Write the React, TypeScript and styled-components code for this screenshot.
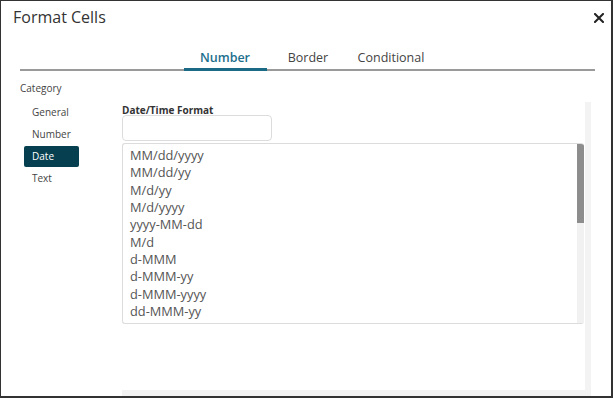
import React from 'react';
import styled, { createGlobalStyle } from 'styled-components';

const formats = [
  'MM/dd/yyyy',
  'MM/dd/yy',
  'M/d/yy',
  'M/d/yyyy',
  'yyyy-MM-dd',
  'M/d',
  'd-MMM',
  'd-MMM-yy',
  'd-MMM-yyyy',
  'dd-MMM-yy',
];

const categories = ['General', 'Number', 'Date', 'Text'];
const tabs = ['Number', 'Border', 'Conditional'];

const App: React.FC = () => {
  return (
    <>
      <GlobalStyle />
      <Dialog>
        <Header>
          <Title>Format Cells</Title>
          <CloseButton aria-label='close'>
            <svg width='10' height='10' viewBox='0 0 10 10'>
              <path d='M1 1 L9 9 M9 1 L1 9' stroke='#222' strokeWidth='2' strokeLinecap='square' />
            </svg>
          </CloseButton>
        </Header>

        <TabBar>
          {tabs.map((t) => (
            <Tab key={t} $active={t === 'Number'}>
              {t}
            </Tab>
          ))}
        </TabBar>

        <Body>
          <Sidebar>
            <SidebarTitle>Category</SidebarTitle>
            {categories.map((c) => (
              <CategoryItem key={c} $selected={c === 'Date'}>
                {c}
              </CategoryItem>
            ))}
          </Sidebar>

          <Panel>
            <PanelContent>
              <FieldLabel>Date/Time Format</FieldLabel>
              <Input />
              <ListBox>
                <List>
                  {formats.map((f) => (
                    <ListItem key={f}>{f}</ListItem>
                  ))}
                </List>
                <ListTrack>
                  <ListThumb />
                </ListTrack>
              </ListBox>
            </PanelContent>
            <TrackV />
            <TrackH />
          </Panel>
        </Body>
      </Dialog>
    </>
  );
};

const GlobalStyle = createGlobalStyle`
  * { box-sizing: border-box; }
  html, body {
    margin: 0;
    padding: 0;
    background: #fff;
  }
  body {
    font-family: 'Open Sans', 'Liberation Sans', sans-serif;
    color: #333;
  }
`;

const Dialog = styled.div`
  width: 613px;
  height: 398px;
  border-style: solid;
  border-color: #333;
  border-width: 1px 2px 2px 1px;
  display: flex;
  flex-direction: column;
  overflow: hidden;
  background: #fff;
`;

const Header = styled.div`
  display: flex;
  align-items: center;
  justify-content: space-between;
  padding: 4px 5px 0 12px;
  height: 28px;
`;

const Title = styled.h1`
  margin: 0;
  font-size: 16px;
  font-weight: 400;
  color: #333;
`;

const CloseButton = styled.button`
  border: 0;
  background: none;
  padding: 0;
  width: 14px;
  height: 14px;
  display: flex;
  align-items: center;
  justify-content: center;
  margin-top: 2px;
`;

const TabBar = styled.div`
  margin: 14px 16px 0 19px;
  display: flex;
  justify-content: center;
  border-bottom: 2px solid #9a9a9a;
  height: 28px;
  padding-left: 1px;
`;

const Tab = styled.div<{ $active?: boolean }>`
  min-width: 83px;
  padding: 5px 8px 0;
  text-align: center;
  font-size: 12.5px;
  line-height: 19px;
  color: ${(p) => (p.$active ? '#1c6f8c' : '#444')};
  font-weight: ${(p) => (p.$active ? 600 : 400)};
  border-bottom: 3px solid ${(p) => (p.$active ? '#1b6a85' : 'transparent')};
  margin-bottom: -2px;
`;

const Body = styled.div`
  flex: 1;
  display: flex;
  min-height: 0;
  padding-top: 10px;
`;

const Sidebar = styled.div`
  width: 121px;
  padding-left: 19px;
  display: flex;
  flex-direction: column;
  align-items: flex-start;
`;

const SidebarTitle = styled.div`
  font-size: 10px;
  color: #444;
  line-height: 14px;
  margin-bottom: 7px;
`;

const CategoryItem = styled.div<{ $selected?: boolean }>`
  margin-left: 4px;
  width: 55px;
  height: 21px;
  padding-left: 8px;
  font-size: 10px;
  line-height: 21px;
  margin-bottom: 1px;
  border-radius: 2px;
  color: ${(p) => (p.$selected ? '#fff' : '#444')};
  background: ${(p) => (p.$selected ? '#053f50' : 'transparent')};
`;

const Panel = styled.div`
  flex: 1;
  display: grid;
  grid-template-columns: 1fr 6px;
  grid-template-rows: 1fr 6px;
  margin-right: 20px;
  margin-top: 21px;
`;

const PanelContent = styled.div`
  display: flex;
  flex-direction: column;
  align-items: flex-start;
  padding-top: 2px;
  padding-right: 1px;
  background: #fff;
`;

const FieldLabel = styled.label`
  font-size: 10px;
  font-weight: 700;
  color: #333;
  line-height: 12px;
`;

const Input = styled.input`
  width: 150px;
  height: 26px;
  border: 1px solid #dcdcdc;
  border-radius: 4px;
  margin-top: -1px;
  outline: none;
`;

const ListBox = styled.div`
  width: 100%;
  height: 181px;
  margin-top: 2px;
  border: 1px solid #dcdcdc;
  border-right: 0;
  border-radius: 3px;
  display: flex;
  background: #fff;
  overflow: hidden;
`;

const List = styled.ul`
  flex: 1;
  margin: 0;
  padding: 3px 7px;
  list-style: none;
`;

const ListItem = styled.li`
  font-size: 12.8px;
  line-height: 17.35px;
  color: #555;
`;

const ListTrack = styled.div`
  width: 7px;
  background: #f1f1f1;
  margin-top: -1px;
`;

const ListThumb = styled.div`
  height: 80px;
  background: #8d8d8d;
`;

const TrackV = styled.div`
  grid-column: 2;
  grid-row: 1 / span 2;
  background: #f3f3f3;
`;

const TrackH = styled.div`
  grid-column: 1;
  grid-row: 2;
  background: #f3f3f3;
`;

export default App;
